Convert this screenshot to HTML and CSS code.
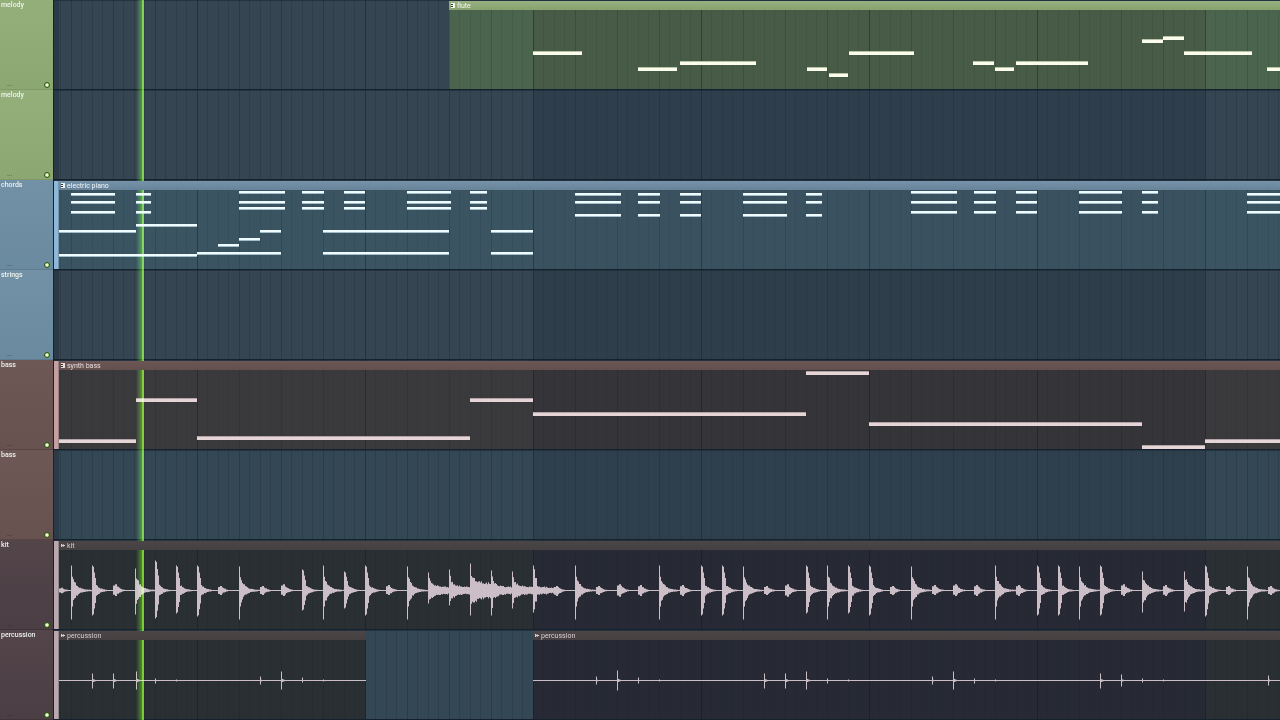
FILE: index.html
```html
<!DOCTYPE html>
<html lang="en">
<head>
<meta charset="utf-8">
<title>Playlist</title>
<link rel="stylesheet" href="styles.css">
</head>
<body>
<main class="playlist" id="playlist">
  <div class="playhead"></div>
</main>
<script src="playlist.js"></script>
</body>
</html>
```
FILE: styles.css
```css
* { box-sizing: border-box; }

body {
  margin: 0;
  background: #2f3e4c;
  font-family: Roboto, "Liberation Sans", sans-serif;
  font-size: 7px;
  line-height: 8px;
  color: #eef2ee;
}

.playlist {
  --head: 53px;
  position: relative;
  overflow: hidden;
}

.track {
  display: grid;
  grid-template-columns: var(--head) 1fr;
  height: 90px;
}

.track-head {
  display: flex;
  flex-direction: column;
  justify-content: space-between;
  padding: 1px 3px 1px 1px;
  background: linear-gradient(var(--head-top), var(--head-bottom));
  border-bottom: 1px solid var(--head-edge);
}

.track-name { font-weight: 500; }

.track-foot {
  display: flex;
  justify-content: space-between;
  align-items: flex-end;
  height: 8px;
  padding-left: 6px;
  color: #00000080;
}

.led {
  appearance: none;
  width: 6px;
  height: 6px;
  margin: 0;
  border: 1px solid #34551f;
  border-radius: 50%;
  background: #7fae48;
}

.led:checked { background: radial-gradient(#f2ffd8 30%, #8fd84a 80%); }

.lane {
  --start: 53px;
  display: flex;
  min-width: 0;
  overflow: hidden;
  padding-left: 1px;
  border-bottom: 1px solid #15222d;
  box-shadow: inset 1px 0 #17222b, inset 6px 0 #1d2b3566, inset 0 1px #1b293599;
}

/* Sub-beat, beat and bar lines over the four-bar shading, in timeline coordinates. */
.ruled {
  background-image:
    linear-gradient(90deg, var(--bar-line) 1px, transparent 1px),
    linear-gradient(90deg, var(--beat-line) 1px, transparent 1px),
    linear-gradient(90deg, var(--step-line) 1px, transparent 1px 10px, var(--step-line) 10px 11px, transparent 11px),
    linear-gradient(90deg, var(--odd) 50%, var(--even) 50%);
  background-size: 168px 100%, 42px 100%, 21px 100%, 1344px 100%;
  background-position:
    calc(197px - var(--start)) 0,
    calc(197px - var(--start)) 0,
    calc(197px - var(--start)) 0,
    calc(-139px - var(--start)) 0;
  background-origin: border-box;
}

.lane.ruled {
  --bar-line: #1d2c3890;
  --beat-line: #22313d50;
  --step-line: #1e2d3a50;
}

.clip-body.ruled {
  --bar-line: #0a151c40;
  --beat-line: #0a151c18;
  --step-line: #0a151c18;
}

.clip-tail {
  flex: none;
  width: 5px;
  margin-top: 1px;
  background: var(--tail);
  border-right: 1px solid #00000033;
}

.clip {
  display: flex;
  flex-direction: column;
  flex: none;
  min-width: 0;
  margin-top: 1px;
}

.clip.open { flex: 1; }

.clip-head {
  position: relative;
  z-index: 2;
  display: flex;
  align-items: center;
  gap: 1px;
  height: 9px;
  padding-left: 1px;
  background: linear-gradient(var(--bar-top), var(--bar-bottom));
  color: var(--bar-text);
  white-space: nowrap;
}

.clip-icon { width: 6px; height: 7px; flex: none; }

.clip-body { flex: 1; min-height: 0; overflow: hidden; }

.clip-art { display: block; width: 100%; height: 100%; }

.green {
  --head-top: #94af7a; --head-bottom: #8da773; --head-edge: #7f9a68;
  --lane-odd: #354552; --lane-even: #2f3e4c;
  --bar-top: #97b183; --bar-bottom: #87a26c; --bar-text: #f2f7ea;
  --body-odd: #4a644d; --body-even: #485b47;
  --note: #fbfcec; --note-edge: #b9c3a6;
}

.blue {
  --head-top: #7291a6; --head-bottom: #6a8a9f; --head-edge: #5d7c90;
  --lane-odd: #354552; --lane-even: #2f3e4b;
  --bar-top: #7693a9; --bar-bottom: #66839a; --bar-text: #edf4f8;
  --body-odd: #3a5462; --body-even: #3a525f;
  --tail: #8fb8d8; --note: #eefcff; --note-edge: #a2bdc8;
}

.brown {
  --head-top: #6e5855; --head-bottom: #675250; --head-edge: #594644;
  --lane-odd: #344754; --lane-even: #2e404e;
  --bar-top: #6c5656; --bar-bottom: #63504e; --bar-text: #e8dddd;
  --body-odd: #3a3a3d; --body-even: #353438;
  --tail: #c4a0a2; --note: #e6d5d7; --note-edge: #b3a3a6;
}

.plum {
  --head-top: #53454a; --head-bottom: #4b3e44; --head-edge: #3f343a;
  --lane-odd: #344754; --lane-even: #2e404e;
  --bar-top: #4b4546; --bar-bottom: #454041; --bar-text: #d8cfd3;
  --body-odd: #292f32; --body-even: #272a34;
  --tail: #b8a9b0; --note: #cbbec7; --note-edge: #cbbec7;
}

.lane { --odd: var(--lane-odd); --even: var(--lane-even); }
.clip-body { --odd: var(--body-odd); --even: var(--body-even); }

.note { fill: var(--note); }
.note-edge { fill: var(--note-edge); }
.wave { fill: var(--note); }

.playhead {
  position: absolute;
  z-index: 1;
  top: 0;
  bottom: 0;
  left: 136px;
  width: 8px;
  background: linear-gradient(90deg, #20500000, #2c7000 6px, #60c000 6px);
  mix-blend-mode: screen;
  pointer-events: none;
}
```
FILE: playlist.js
```js
// Notes are [left, top, width]; left is in timeline pixels, top is inside the track.
const chord = (x, tops, w) => tops.map(y => [x, y, w]);
const high = [11, 21, 27], low = [13, 21, 31], wide = [13, 21, 34], spread = [11, 21, 31];

const flute = [
  [533, 51, 49], [638, 67, 39], [680, 61, 76], [807, 67, 20], [829, 73, 19],
  [849, 51, 65], [973, 61, 21], [995, 67, 19], [1016, 61, 72], [1142, 39, 21],
  [1163, 36, 21], [1184, 51, 68], [1267, 67, 40]
];
const piano = [
  ...chord(71, low, 44), ...chord(136, low, 15),
  ...chord(239, high, 46), ...chord(302, high, 22), ...chord(344, high, 21),
  ...chord(407, high, 44), ...chord(470, high, 17),
  ...chord(575, wide, 46), ...chord(638, wide, 22),
  ...chord(680, wide, 21), ...chord(743, wide, 44), ...chord(806, wide, 16),
  ...chord(911, spread, 46), ...chord(974, spread, 22), ...chord(1016, spread, 21),
  ...chord(1079, spread, 43), ...chord(1142, spread, 16), ...chord(1247, low, 60),
  [59, 50, 77], [136, 44, 61], [59, 74, 138], [197, 72, 84], [218, 64, 21],
  [239, 58, 21], [260, 50, 21], [323, 50, 126], [323, 72, 126], [491, 50, 42], [491, 72, 42]
];
const bass = [
  [59, 79, 77], [136, 38, 61], [197, 76, 273], [470, 38, 63], [533, 52, 273],
  [806, 11, 63], [869, 62, 273], [1142, 85, 63], [1205, 79, 90]
];

// Hits are [left, rise, fall, kind]: s sharp, k kick, h hat, w x v washed, p click.
const kit = `59,3,3,h 71,25,29,s 92,25,25,k 113,7,6,h 135,22,24,s 155,30,28,k 176,25,23,k
197,25,26,k 218,5,5,h 239,24,29,s 260,5,5,h 281,7,6,h 302,21,20,k 323,25,29,s 344,19,18,k
365,25,25,k 386,6,5,h 407,24,29,s 428,18,13,w 449,21,15,w 470,27,25,x 491,20,25,w 512,19,18,w
533,25,22,v 554,5,6,h 575,25,29,s 596,5,5,h 617,7,7,h 638,6,6,h 659,25,29,s 680,6,6,h
701,25,25,k 722,25,25,k 743,24,29,s 764,5,5,h 785,7,7,h 806,25,23,k 827,25,29,s 848,25,23,k
869,25,25,k 890,5,5,h 911,24,29,s 932,6,5,h 953,7,6,h 974,6,6,h 995,25,29,s 1016,6,6,h
1037,25,25,k 1058,25,25,k 1079,24,29,s 1100,25,25,k 1121,7,6,h 1142,19,22,s 1163,6,6,h
1184,19,21,s 1205,25,26,k 1226,5,5,h 1247,24,29,s 1268,5,5,h`;
const percA = `92,7,8,p 113,7,8,p 136,9,9,p 155,2,3,p 176,1,1,p 260,4,4,p 281,9,9,p 302,3,2,p 323,1,1,p`;
const percB = `596,4,4,p 617,10,10,p 638,3,3,p 659,1,1,p 764,7,8,p 785,7,8,p 806,9,9,p 827,2,3,p
848,1,1,p 932,4,4,p 953,9,9,p 974,2,3,p 995,1,1,p 1100,7,8,p 1121,6,6,p 1142,2,2,p
1163,1,1,p 1268,5,5,p`;

const tracks = [
  { name: 'melody', tone: 'green', clips: [{ name: 'flute', from: 449, notes: flute, thick: 3 }] },
  { name: 'melody', tone: 'green', clips: [] },
  { name: 'chords', tone: 'blue', clips: [{ name: 'electric piano', from: 59, notes: piano, thick: 2 }] },
  { name: 'strings', tone: 'blue', clips: [] },
  { name: 'bass', tone: 'brown', clips: [{ name: 'synth bass', from: 59, notes: bass, thick: 3 }] },
  { name: 'bass', tone: 'brown', clips: [] },
  { name: 'kit', tone: 'plum', clips: [{ name: 'kit', from: 59, hits: kit }] },
  { name: 'percussion', tone: 'plum', clips: [
    { name: 'percussion', from: 59, to: 366, hits: percA },
    { name: 'percussion', from: 533, hits: percB }] }
];

const laneLeft = 53, bodyTop = 10, timelineEnd = 1300;

// Level still sounding d pixels after each kind of hit.
function envelope(kind, d, peak, x) {
  const grain = 0.82 + 0.3 * Math.abs(Math.sin(x * 2.7) * Math.cos(x * 1.3));
  if (kind === 'p') return d < 1 ? peak : Math.min(peak * 0.25, 2) * Math.exp(-d / 3);
  if (kind === 'h') return d < 2 ? peak * 0.7 : d < 4 ? peak * 0.9 : peak * 0.65 * Math.exp(-(d - 4) / 4) * grain;
  if (kind === 's') return d < 1 ? peak : d < 2 ? peak * 0.55 : (10 * Math.exp(-(d - 2) / 4) + 1.5 * Math.exp(-d / 20)) * grain;
  if (kind === 'k') return d < 1 ? peak : d < 2 ? peak * 0.95 : d < 3 ? peak * 0.72 : d < 4 ? peak * 0.5 : 5.5 * Math.exp(-(d - 4) / 5) * grain;
  if (kind === 'v') return d < 1 ? peak : d < 2 ? peak * 0.85 : d < 4 ? peak * 0.5 : (3.5 + 2 * Math.exp(-d / 4)) * grain * (d > 14 ? 0.8 : 1);
  if (kind === 'x') return d < 1 ? peak : (7 + 9 * Math.exp(-d / 6)) * grain;
  return d < 1 ? peak : d < 2 ? peak * 0.7 : (3.5 + 8 * Math.exp(-d / 5)) * grain;
}

function wavePath(clip) {
  const hits = clip.hits.trim().split(/\s+/).map(h => {
    const [x, up, down, kind] = h.split(',');
    return { x: +x, up: +up, down: +down, kind };
  });
  const mid = 40.5, end = clip.to || timelineEnd;
  const top = [], bottom = [];
  let i = -1;
  for (let x = clip.from; x < end; x++) {
    while (i + 1 < hits.length && hits[i + 1].x <= x) i++;
    const hit = hits[i];
    const up = hit ? envelope(hit.kind, x - hit.x, hit.up, x) : 0;
    const down = hit ? envelope(hit.kind, x - hit.x, hit.down, x + 5) : 0;
    const y1 = (mid - Math.max(0.5, up)).toFixed(1), y2 = (mid + Math.max(0.5, down)).toFixed(1);
    top.push(`${x},${y1} ${x + 1},${y1}`);
    bottom.unshift(`${x + 1},${y2} ${x},${y2}`);
  }
  return `<path class="wave" d="M${top.join(' ')} ${bottom.join(' ')}Z"/>`;
}

const noteRects = clip => clip.notes.map(([x, y, w]) =>
  `<rect class="note-edge" x="${x}" y="${y - bodyTop}" width="${w}" height="${clip.thick + 1}"/>` +
  `<rect class="note" x="${x}" y="${y - bodyTop + (clip.thick === 3 ? 1 : 0)}" width="${w}" height="${clip.thick}"/>`).join('');

const patternIcon = '<svg class="clip-icon" viewBox="0 0 6 7" aria-hidden="true"><path d="M1 1h4v5H1z" fill="currentColor"/><path d="M1 2.5h2M1 4.5h2" stroke="#333" stroke-width="1"/></svg>';
const audioIcon = '<svg class="clip-icon" viewBox="0 0 6 7" aria-hidden="true"><path d="M1.5 2v3M1 3.5h4M3 2.5v2M3.5 2.5l1 1-1 1" fill="none" stroke="currentColor"/></svg>';

function clipMarkup(clip, previousEnd) {
  const gap = clip.from - previousEnd;
  const size = clip.to ? `width:${clip.to - clip.from}px;` : '';
  return `<section class="clip${clip.to ? '' : ' open'}" style="margin-left:${gap}px;${size}--start:${clip.from}px">
    <header class="clip-head">${clip.notes ? patternIcon : audioIcon}<span>${clip.name}</span></header>
    <div class="clip-body ruled"><svg class="clip-art" aria-hidden="true"><g transform="translate(${-clip.from} 0)">
    ${clip.notes ? noteRects(clip) : wavePath(clip)}</g></svg></div></section>`;
}

function trackMarkup(track) {
  let cursor = laneLeft + 1, inner = '';
  if (track.clips.length && track.clips[0].from === 59) {
    inner += '<div class="clip-tail"></div>';
    cursor = 59;
  }
  for (const clip of track.clips) {
    inner += clipMarkup(clip, cursor);
    cursor = clip.to;
  }
  return `<section class="track ${track.tone}">
    <header class="track-head"><span class="track-name">${track.name}</span>
    <div class="track-foot"><span>...</span><input class="led" type="checkbox" checked aria-label="${track.name} on"></div></header>
    <div class="lane ruled">${inner}</div></section>`;
}

document.getElementById('playlist').insertAdjacentHTML('afterbegin', tracks.map(trackMarkup).join(''));
```
